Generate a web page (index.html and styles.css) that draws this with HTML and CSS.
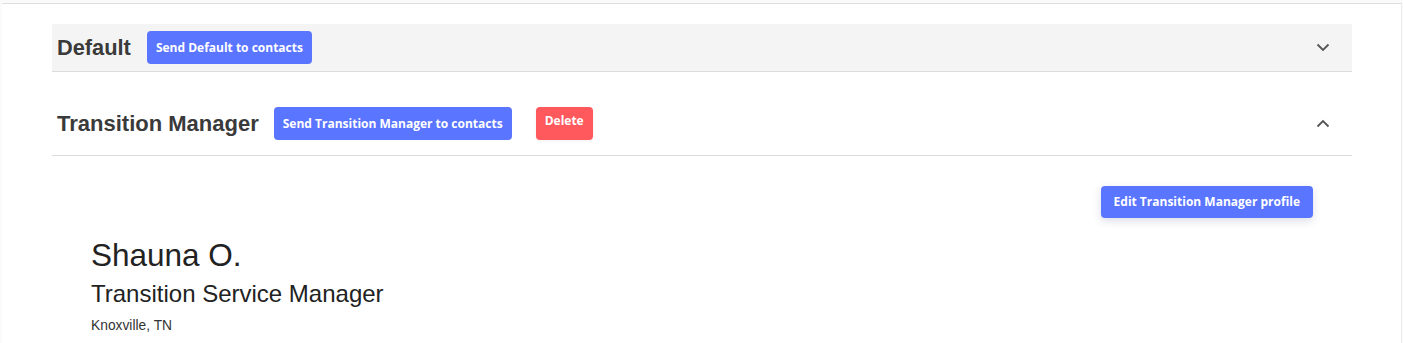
FILE: index.html
```html
<!DOCTYPE html>
<html lang="en">
<head>
<meta charset="utf-8">
<title>Profiles</title>
<link rel="stylesheet" href="styles.css">
</head>
<body>
<div class="page">
  <div class="card">
    <section class="panel">
      <div class="panel-head panel-head--closed">
        <h2 class="panel-title">Default</h2>
        <button class="btn btn-blue">Send Default to contacts</button>
        <span class="chev">
          <svg width="14" height="9" viewBox="0 0 14 9"><path d="M1.5 1.5 L7 7 L12.5 1.5" fill="none" stroke="#555" stroke-width="1.8"/></svg>
        </span>
      </div>
    </section>
    <section class="panel panel--open">
      <div class="panel-head panel-head--open">
        <h2 class="panel-title">Transition Manager</h2>
        <button class="btn btn-blue">Send Transition Manager to contacts</button>
        <button class="btn btn-red">Delete</button>
        <span class="chev">
          <svg width="14" height="9" viewBox="0 0 14 9"><path d="M1.5 7.5 L7 2 L12.5 7.5" fill="none" stroke="#555" stroke-width="1.8"/></svg>
        </span>
      </div>
      <div class="panel-body">
        <div class="edit-row">
          <button class="btn btn-blue btn-edit">Edit Transition Manager profile</button>
        </div>
        <div class="person-name">Shauna O.</div>
        <div class="person-title">Transition Service Manager</div>
        <div class="person-loc">Knoxville, TN</div>
      </div>
    </section>
  </div>
</div>
</body>
</html>
```
FILE: styles.css
```css
html, body {
  margin: 0;
  padding: 0;
}
body {
  background: #fafafa;
  font-family: "Liberation Sans", Arial, sans-serif;
  color: #333;
}
.page {
  height: 343px;
  box-sizing: border-box;
  padding: 3px 1px 0 2px;
  overflow: hidden;
}
.card {
  height: 100%;
  box-sizing: border-box;
  background: #fff;
  border-top: 1px solid #dedede;
  border-right: 1px solid #ececec;
  padding: 20px 49px 0 50px;
}
.panel-head {
  display: flex;
  align-items: center;
  border-bottom: 1px solid #dcdcdc;
  padding-left: 5px;
  padding-right: 22px;
}
.panel-head--closed {
  background: #f4f4f4;
  height: 47px;
}
.panel--open {
  margin-top: 20px;
}
.panel-head--open {
  height: 63px;
  padding-left: 5px;
}
.panel-title {
  margin: 0 16px 0 0;
  font-size: 21.8px;
  line-height: 26px;
  font-weight: bold;
  color: #3a3a3a;
}
.panel-head--open .panel-title {
  font-size: 22px;
  margin-right: 15px;
}
.btn {
  font-family: "Open Sans", "Noto Sans", sans-serif;
  font-weight: 700;
  font-size: 12px;
  color: #fff;
  border: 0;
  border-radius: 4px;
  height: 33px;
  padding: 0 9px;
  line-height: 33px;
  cursor: pointer;
}
.btn-blue {
  background: #5a75ff;
}
.btn-red {
  background: #ff585d;
  margin-left: 24px;
  line-height: 28px;
  padding-bottom: 5px;
  box-shadow: 0 1px 4px rgba(0,0,0,0.06);
}
.chev {
  margin-left: auto;
  display: flex;
  align-items: center;
}
.panel-body {
  padding: 30px 39px 0 39px;
}
.edit-row {
  display: flex;
  justify-content: flex-end;
}
.btn-edit {
  height: 32px;
  line-height: 32px;
  padding: 0 13px;
  box-shadow: 0 3px 8px rgba(60, 70, 120, 0.18);
}
.person-name {
  margin-top: 19px;
  font-size: 31.5px;
  line-height: 36px;
  color: #222;
}
.person-title {
  margin-top: 7px;
  font-size: 24px;
  line-height: 28px;
  color: #222;
}
.person-loc {
  margin-top: 10px;
  font-size: 13.8px;
  line-height: 16px;
  color: #333;
}
```
